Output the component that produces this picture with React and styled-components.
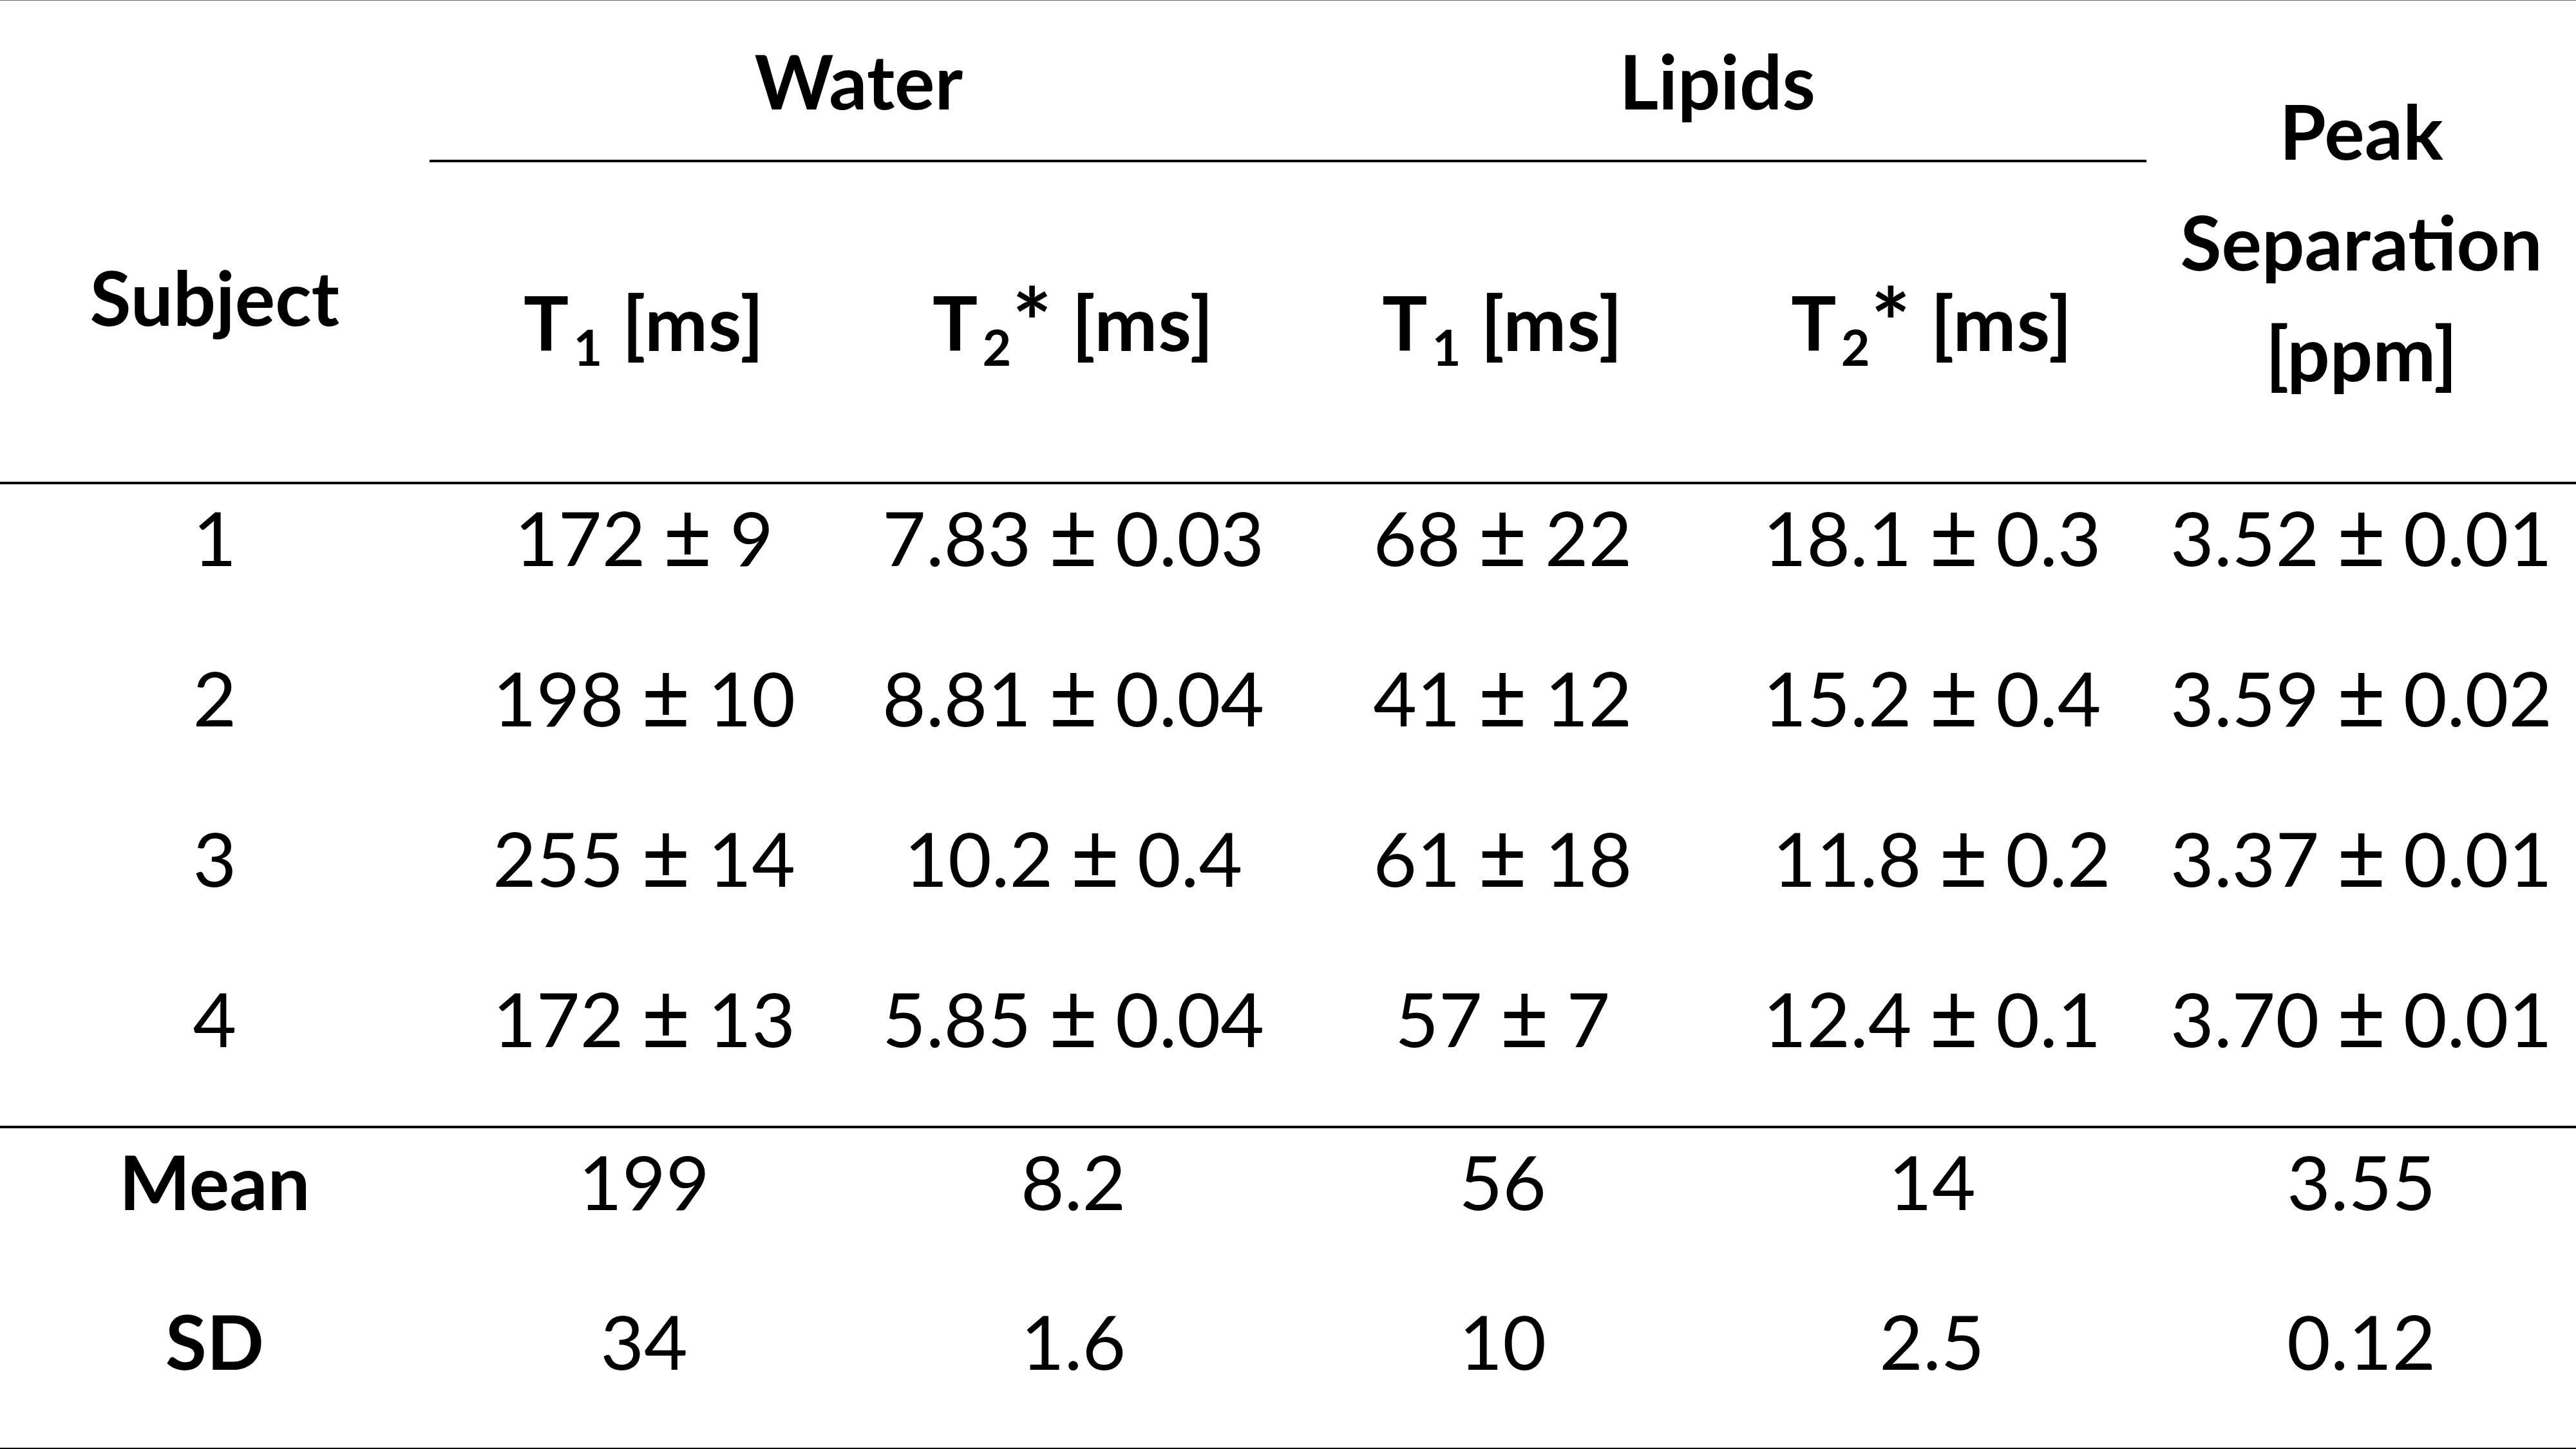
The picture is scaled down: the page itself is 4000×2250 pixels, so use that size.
import React from "react";
import styled, { createGlobalStyle } from "styled-components";

const GlobalStyle = createGlobalStyle`
  html, body {
    margin: 0;
    padding: 0;
    background: #ffffff;
  }
  body {
    font-family: Lato, "Open Sans", "Liberation Sans", sans-serif;
    color: #000000;
  }
`;

const Table = styled.div`
  width: 4000px;
  height: 2250px;
  box-sizing: border-box;
  border-top: 1px solid #6a6a6a;
  display: flex;
  flex-direction: column;
  font-size: 117px;
  line-height: 140px;
`;

const Header = styled.div`
  display: grid;
  grid-template-columns: repeat(6, 1fr);
  grid-template-rows: 251px 496px;
  border-bottom: 4px solid #000;
  font-weight: 700;
`;

const GroupHead = styled.div`
  grid-row: 1;
  grid-column: ${(p) => p.$col} / span 2;
  box-sizing: border-box;
  border-bottom: 4px solid #000;
  display: flex;
  align-items: center;
  justify-content: center;
`;

const SideHead = styled.div`
  grid-row: 1 / span 2;
  grid-column: ${(p) => p.$col};
  display: flex;
  align-items: ${(p) => (p.$top ? "flex-start" : "center")};
  justify-content: center;
  text-align: center;
  padding-top: ${(p) => p.$top || 0}px;
  line-height: ${(p) => p.$lh || 140}px;
`;

const SubHead = styled.div`
  grid-row: 2;
  display: flex;
  align-items: center;
  justify-content: center;
`;

const HeadText = styled.span`
  white-space: pre;
  letter-spacing: 0.01em;
`;

const Sub = styled.sub`
  font-size: 0.66em;
  line-height: 0;
  vertical-align: -0.3em;
  margin-left: 0.08em;
`;

const Star = styled.span`
  font-size: 1.25em;
  line-height: 0;
  vertical-align: -0.06em;
`;

const PlusMinus = styled.span`
  display: inline-block;
  font-size: 1.12em;
  line-height: 0;
  transform: scaleY(1.12);
  margin: 0 -0.02em;
`;

const Section = styled.div`
  display: flex;
  flex-direction: column;
  border-bottom: ${(p) => (p.$last ? "2px solid #000" : "4px solid #000")};
`;

const Row = styled.div`
  display: grid;
  grid-template-columns: repeat(6, 1fr);
  height: ${(p) => p.$h}px;
`;

const Cell = styled.div`
  text-align: center;
  padding-top: 12px;
  white-space: pre;
  font-weight: ${(p) => (p.$bold ? 700 : 400)};
`;

const units = (n, star) => (
  <HeadText>
    T<Sub>{n}</Sub>
    {star ? <Star>*</Star> : ""} [ms]
  </HeadText>
);

const value = (v) => {
  const parts = v.split(" ± ");
  if (parts.length < 2) return v;
  return (
    <>
      {parts[0]} <PlusMinus>±</PlusMinus> {parts[1]}
    </>
  );
};

const data = [
  ["1", "172 ± 9", "7.83 ± 0.03", "68 ± 22", "18.1 ± 0.3", "3.52 ± 0.01"],
  ["2", "198 ± 10", "8.81 ± 0.04", "41 ± 12", "15.2 ± 0.4", "3.59 ± 0.02"],
  ["3", "255 ± 14", "10.2 ± 0.4", "61 ± 18", "\u00a011.8 ± 0.2", "3.37 ± 0.01"],
  ["4", "172 ± 13", "5.85 ± 0.04", "57 ± 7", "12.4 ± 0.1", "3.70 ± 0.01"],
];

const summary = [
  ["Mean", "199", "8.2", "56", "14", "3.55"],
  ["SD", "34", "1.6", "10", "2.5", "0.12"],
];

export default function App() {
  return (
    <>
      <GlobalStyle />
      <Table>
        <Header>
          <SideHead $col={1} $top={390}>
            Subject
          </SideHead>
          <GroupHead $col={2}>Water</GroupHead>
          <GroupHead $col={4}>Lipids</GroupHead>
          <SideHead $col={6} $lh={172}>
            Peak
            <br />
            Separation
            <br />
            [ppm]
          </SideHead>
          <SubHead>{units(1)}</SubHead>
          <SubHead>{units(2, true)}</SubHead>
          <SubHead>{units(1)}</SubHead>
          <SubHead>{units(2, true)}</SubHead>
        </Header>

        <Section>
          {data.map((r) => (
            <Row key={r[0]} $h={249}>
              {r.map((v, i) => (
                <Cell key={i}>{value(v)}</Cell>
              ))}
            </Row>
          ))}
        </Section>

        <Section $last>
          {summary.map((r) => (
            <Row key={r[0]} $h={248}>
              {r.map((v, i) => (
                <Cell key={i} $bold={i === 0}>
                  {v}
                </Cell>
              ))}
            </Row>
          ))}
        </Section>
      </Table>
    </>
  );
}
